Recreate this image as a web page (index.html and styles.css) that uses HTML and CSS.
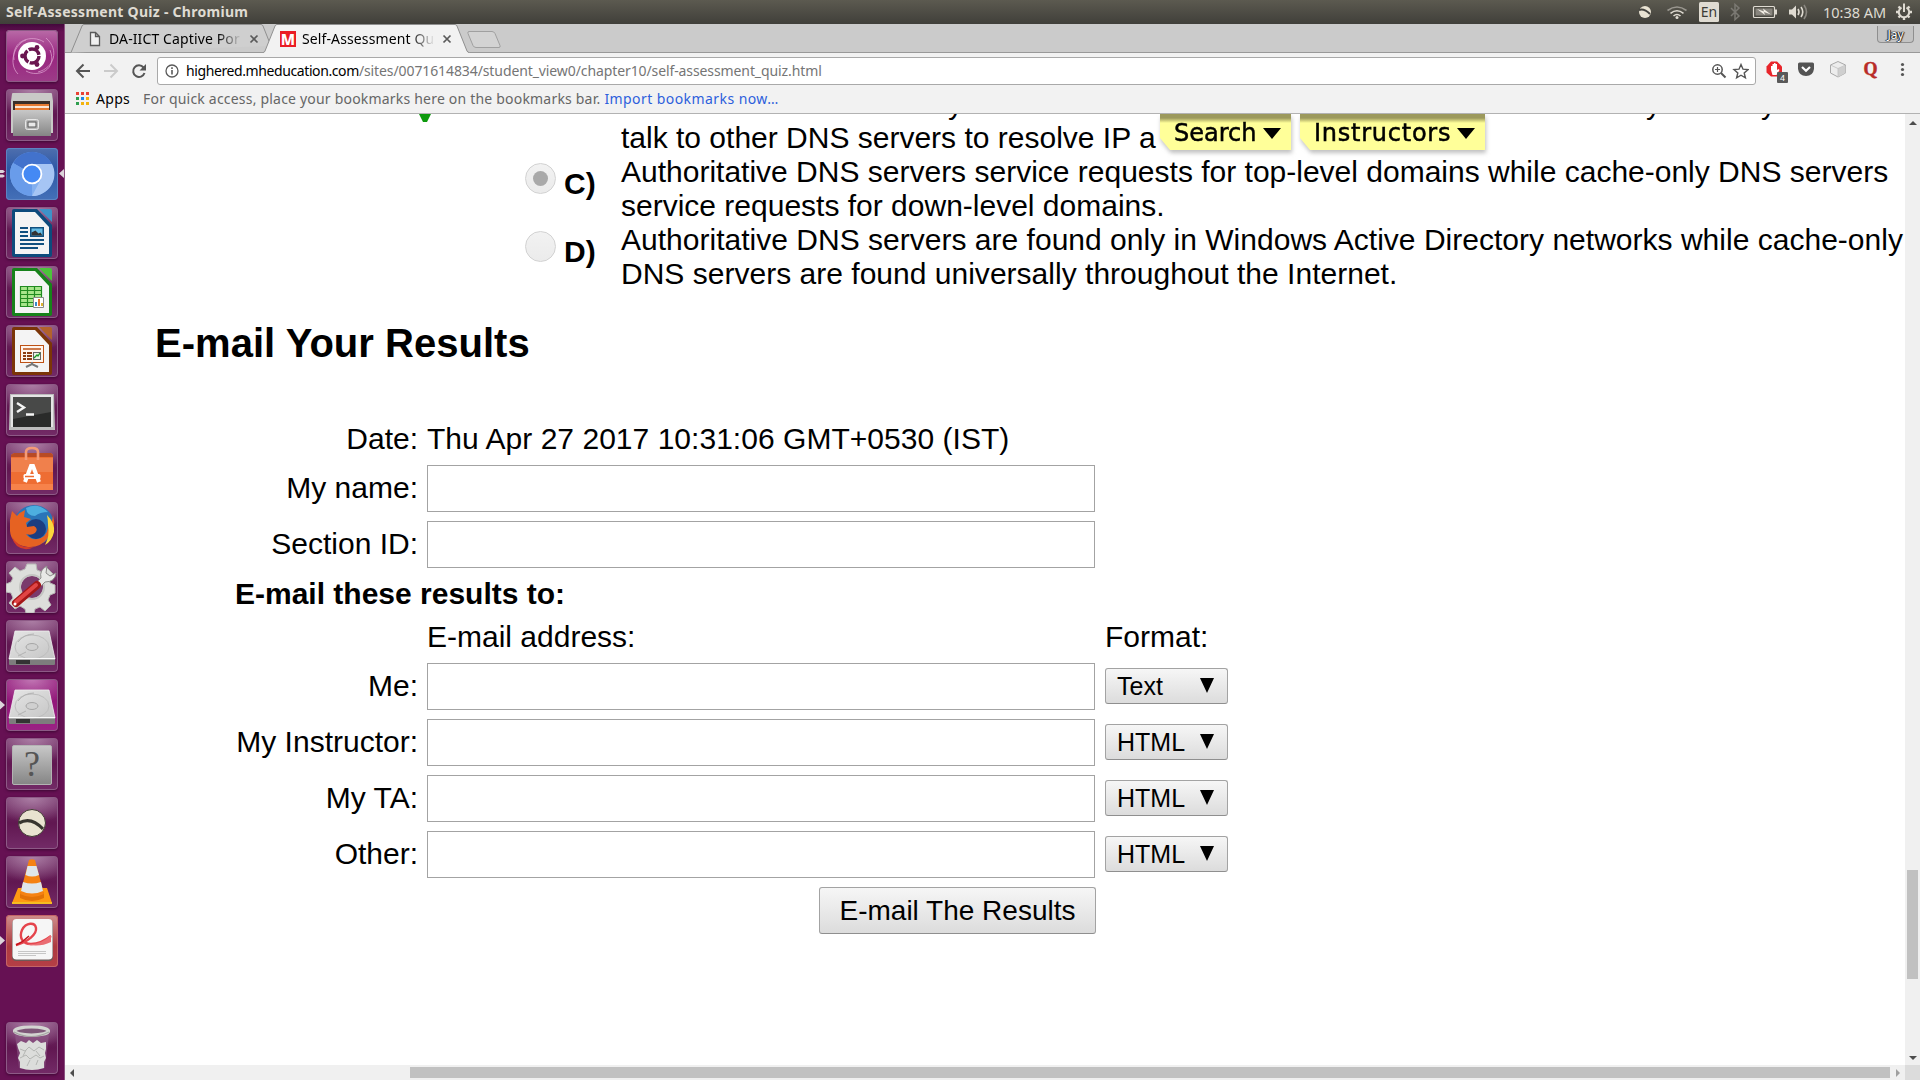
FILE: index.html
```html
<!DOCTYPE html>
<html lang="en">
<head>
<meta charset="utf-8">
<title>Self-Assessment Quiz - Chromium</title>
<link rel="stylesheet" href="styles.css">
</head>
<body>
<header class="panel">
  <span class="panel-title">Self-Assessment Quiz - Chromium</span>
  <svg class="tray" width="180" height="24" viewBox="0 0 180 24">
    <circle cx="5" cy="12" r="6" fill="#e9e3d3"/><path d="M-1 10q5-2 11 4" stroke="#454440" stroke-width="2" fill="none"/>
    <g fill="none" stroke="#dfdbd2" stroke-width="1.6"><path d="M27.500 10.500q9.500-7 19 0" stroke="#99968f"/><path d="M30.500 13.300q6.500-5 13 0"/><path d="M33.500 16q3.500-3 7 0"/></g><circle cx="37" cy="17.500" r="1.500" fill="#dfdbd2"/>
    <rect x="59" y="2" width="20" height="20" rx="1.500" fill="#dfdbd2"/>
    <text class="tray-lang" x="69" y="17" text-anchor="middle">En</text>
    <path d="M91 8l8 8-4 3.500v-15l4 3.500-8 8" fill="none" stroke="#7b7973" stroke-width="1.500"/>
    <rect x="113.500" y="6.500" width="21" height="11" rx="1" fill="none" stroke="#dfdbd2" stroke-width="1.200"/><rect x="115.500" y="8.500" width="17" height="7" fill="#88857e"/><path d="M135 9.500h2v5h-2z" fill="#dfdbd2"/><path d="M117 9l7 2.500-1-3 8 6-7-2.500 1 3z" fill="#f3efe6"/>
    <path d="M149 9.500h3l4-4v13l-4-4h-3z" fill="#dfdbd2"/><g fill="none" stroke="#dfdbd2" stroke-width="1.600"><path d="M158 9q2 3 0 6"/><path d="M161 7q3.500 5 0 10"/><path d="M164 5q5 7 0 14" stroke="#8a8780"/></g>
  </svg>
  <span class="clock">10:38 AM</span>
  <svg width="18" height="18" viewBox="-9 -9 18 18"><g stroke="#dfdbd2" fill="none"><path d="M-2.500-4.500A5.200 5.200 0 1 0 2.500-4.500M0-8.500V0" stroke-width="2"/><path d="M-5.500-5.500l1.500 1.500M5.500-5.500L4-4M-8 0h2M8 0H6M-5.500 5.500L-4 4M5.500 5.500L4 4M0 8V6" stroke-width="2.400"/></g></svg>
</header>

<div class="desktop">
<nav class="launcher">
  <svg class="tile dash" viewBox="0 0 52 52"><g fill="none" stroke="#e3a9d6" stroke-width="1" opacity=".7"><path d="M8 30C5 10 26 4 38 12M44 20c8 20-12 28-24 21M40 8c14 12 8 30-8 34M12 44C2 34 8 14 20 10"/></g><circle cx="26" cy="26" r="14" fill="#fff"/><circle cx="26" cy="26" r="7" fill="none" stroke="#6a1650" stroke-width="3.400" stroke-dasharray="13.200 1.460"/><g fill="#6a1650"><circle cx="16.500" cy="26" r="2.400"/><circle cx="31" cy="17.500" r="2.400"/><circle cx="31" cy="34.500" r="2.400"/></g></svg>
  <svg class="tile" viewBox="0 0 52 52"><path d="M6 5q0-1 1-1h38q1 0 1 1l1 7v32H5V12z" fill="#c9c9c7"/><path d="M7 12h37v11H7z" fill="#3b2f29"/><path d="M9 15h34v8H9z" fill="#e77b33"/><path d="M9 17h34v2H9z" fill="#fbe5d4"/><path d="M7 21h38v26H7z" fill="url(#steel)"/><rect x="19.500" y="30.500" width="13" height="10" rx="2" fill="#b8b8b8" stroke="#e7e7e7"/><rect x="22" y="33" width="8" height="5" fill="#e9e9e9" stroke="#555"/></svg>
  <svg class="tile chromium" viewBox="0 0 52 52"><circle cx="26" cy="26" r="22" fill="#83b0f0"/><path d="M26 26L7 15A22 22 0 0 1 46 16z" fill="#4272cc"/><path d="M26 26L7 15a22 22 0 0 0 19 33z" fill="#699cea"/><path d="M26 16h20a22 22 0 0 1-20 32l9-17z" fill="#a6c5f4"/><circle cx="26" cy="26" r="10.300" fill="#fff"/><circle cx="26" cy="26" r="8.500" fill="#4489f4"/></svg>
  <svg class="tile" viewBox="0 0 52 52"><path d="M6 4q0-2 2-2h23l15 16v30q0 2-2 2H8q-2 0-2-2z" fill="#0d4b7c"/><path d="M33 2h11q2 0 2 2v11z" fill="#3e93c8"/><path d="M9 5h20l14 15v27H9z" fill="#f4f4f4"/><path d="M14 21h8M14 25h8M14 29h8M14 33h24M14 37h24M14 41h18" stroke="#11507f" stroke-width="2"/><path d="M24 20h14v10H24z" fill="#11507f"/><path d="M25.500 21.500h11v7h-11z" fill="#66bde5"/><path d="M25.500 28.500v-3l4-2 3 3 2-1 2 3z" fill="#333"/></svg>
  <svg class="tile" viewBox="0 0 52 52"><path d="M6 4q0-2 2-2h23l15 16v30q0 2-2 2H8q-2 0-2-2z" fill="#17821a"/><path d="M33 2h11q2 0 2 2v11z" fill="#4cc33b"/><path d="M9 5h20l14 15v27H9z" fill="#f4f4f4"/><path d="M14 20h22v20H14z" fill="#a8e58b"/><path d="M14.500 20.500h21v20h-21zM14 24.500h22M14 28.500h22M14 32.500h22M14 36.500h22M21.500 20v20M28.500 20v20" fill="none" stroke="#218b20" stroke-width="1.200"/><path d="M27.500 31.500h10v10h-10z" fill="#fff" stroke="#888"/><path d="M29 36h2v4h-2z" fill="#3a88c6"/><path d="M32 33h2v7h-2z" fill="#e7732a"/><path d="M35 37h2v3h-2z" fill="#ddb230"/></svg>
  <svg class="tile" viewBox="0 0 52 52"><path d="M6 4q0-2 2-2h23l15 16v30q0 2-2 2H8q-2 0-2-2z" fill="#7b3508"/><path d="M33 2h11q2 0 2 2v11z" fill="#b2622c"/><path d="M9 5h20l14 15v27H9z" fill="#f4f4f4"/><rect x="14.500" y="20.500" width="23" height="17" fill="#fff5ed" stroke="#bd5115"/><path d="M17 24h18" stroke="#bd5115" stroke-width="1.500"/><path d="M17 28h3M17 31h3M17 34h3M21 28h5M21 31h5M21 34h5" stroke="#8d3e12" stroke-width="2"/><rect x="27.500" y="27.500" width="7" height="7" fill="#eaf5e5" stroke="#666"/><path d="M28 33l3-3 1 1 2-3" stroke="#199927" stroke-width="1.300" fill="none"/><path d="M20 42l6-3 6 3M26 37v3" stroke="#777" stroke-width="2" fill="none"/></svg>
  <svg class="tile" viewBox="0 0 52 52"><path d="M4 10h44l1 36H3z" fill="#bcbcbc"/><path d="M5 11h42v32H5z" fill="#e5e5e5"/><path d="M7 13h38v30H7z" fill="#2a2b2a"/><path d="M7 13h38v15L7 35z" fill="#484948"/><path d="M11 19l7 4.500-7 4.500M20 30.500h8" fill="none" stroke="#f4f4f4" stroke-width="2.400"/></svg>
  <svg class="tile" viewBox="0 0 52 52"><path d="M5 12l3-2h37l2 2v34H5z" fill="#ee6d33"/><path d="M5 12l3-2h37l2 2v2H5z" fill="#b84b25"/><path d="M5 15h42v14H5z" fill="#f0804c"/><path d="M5 41h42v6H5z" fill="#f7824a"/><path d="M20 17V9q0-4 6-4t6 4v8" fill="none" stroke="#f49b77" stroke-width="2.600"/><path d="M19 39l6-16h2l6 16" fill="none" stroke="#fff" stroke-width="4"/><rect x="17.500" y="31" width="17" height="5" rx="1.500" fill="#fff"/><path d="M19 33.500h9" stroke="#ee6d33" stroke-width="1.500"/></svg>
  <svg class="tile" viewBox="0 0 52 52"><circle cx="28" cy="23" r="20" fill="#2a75b8"/><path d="M20 6q12-6 22 4-8 0-13 4-8 0-9-8z" fill="#4daedf"/><circle cx="30" cy="27" r="10" fill="#1b3d80"/><path d="M4 18l2-9 5 5q3-4 8-6l-1 7 7 2-5 4 1 4 7-1q5 3 1 7-4 3-9 1 6 8 15 4 8-4 7-15 4 2 5-8 4 14-5 23-8 10-20 9Q5 43 4 29z" fill="#e66222"/><path d="M41 13q8 8 7 17-2 9-9 13 5-9 3-20 0-5-1-10z" fill="#fbd63c"/><path d="M6 35q7 12 22 10-9 5-17-1-4-4-5-9z" fill="#d33c28"/></svg>
  <svg class="tile" viewBox="0 0 52 52"><path d="M21 3h9l1 6 5 2 5-4 6 6-4 5 1 4 5 2v8l-5 2-2 5 3 5-6 6-5-4-5 2-1 4h-8l-1-4-5-3-5 3-6-6 4-5-2-5-5-1v-8l5-2 2-4-4-5 6-6 5 4 5-2z" fill="#dddedb" stroke="#b9bab7"/><circle cx="26" cy="26" r="11" fill="#7a3a6c"/><circle cx="26" cy="26" r="12" fill="none" stroke="#c4c5c2" stroke-width="2"/><path d="M29 23l6-6q-2-8 6-12l-1 7 4 3 6-3q-1 9-11 9l-6 6z" fill="#e8e9e6" stroke="#8e8e8c"/><path d="M10 42l21-18" stroke="#a41717" stroke-width="8" stroke-linecap="round"/><path d="M10 41l20-17" stroke="#e04545" stroke-width="4" stroke-linecap="round"/><circle cx="9" cy="43" r="1.500" fill="#fff"/></svg>
  <svg class="tile" viewBox="0 0 52 52"><use href="#drive"/></svg>
  <svg class="tile active" viewBox="0 0 52 52"><use href="#drive"/></svg>
  <svg class="tile" viewBox="0 0 52 52"><rect x="6.500" y="7.500" width="39" height="39" rx="1.500" fill="url(#steel)" stroke="#b3b3b3"/><text class="tile-q" x="26" y="38" text-anchor="middle">?</text></svg>
  <svg class="tile" viewBox="0 0 52 52"><circle cx="26" cy="26" r="13.500" fill="#e9e3d0" stroke="#3f3a33"/><path d="M13 26q12-7 24 6" fill="none" stroke="#37352e" stroke-width="3.200"/></svg>
  <svg class="tile" viewBox="0 0 52 52"><path d="M12 32h29l5 15H6z" fill="#ff9a12"/><path d="M6 46h40v2H6z" fill="#f5bd21"/><path d="M14 36q12 5 24 0v6q-12 6-24 0z" fill="#e27207"/><path d="M23 4q3-1.500 6 0l9 34q-12 6-24 0z" fill="#f58213"/><path d="M21.500 10h9l2.500 9q-7 3-13.500 0zM17 26q9 3 18 0l2 9q-11 5-22 0z" fill="#dfe6ea"/></svg>
  <svg class="tile reader" viewBox="0 0 52 52"><rect x="6" y="5" width="41" height="41" rx="4" fill="#6f5a58"/><rect x="6.500" y="4" width="40" height="40.500" rx="4" fill="#f6f6f6"/><path d="M10 30C22 27 31 19 30 13 29 7 20 7 16 15c-3 7 0 14 9 14 8 0 15-4 20-8" fill="none" stroke="#e5444c" stroke-width="2.400"/><path d="M19 29q15 2 26-9v7q-12 6-26 2z" fill="#ea6d73"/><path d="M10 30C17 27 21 23 23 21" stroke="#c4161e" stroke-width="1.500" fill="none"/><path d="M12 36.500h28M12 38.500h28M12 40.500h18" stroke="#c6c6c6"/></svg>
  <svg class="tile trash" viewBox="0 0 52 52"><path d="M9 12h34l-4 34q-13 4-26 0z" fill="#8d5a87" opacity=".6"/><path d="M11 22l4-3 5 2 3-3 4 3 4-3 4 3 5-1v7l-1 4 1 5-2 4v6q-12 4-24 0v-6l-2-4 2-5-2-5z" fill="#dcdddb"/><path d="M14 27l5 2 4-4 5 4 5-4 5 3M14 36l6-3 4 4 6-4 4 3 4-2M20 28l-3 6M30 29l4 5M24 38l-3 6M32 38l-2 5" stroke="#b4b6b3" fill="none"/><ellipse cx="25.500" cy="9" rx="17" ry="4" fill="#7e5678" stroke="#d3d4d1" stroke-width="3.200"/><path d="M8 10q17 9 35 0" fill="none" stroke="#a5a6a3" stroke-width="1.200"/></svg>
  <svg class="pips" width="65" height="1056" viewBox="0 24 65 1056"><g fill="#dcd5db"><path d="M0 170h3l2 1.500-2 1.500H0zM0 174.500h3l2 1.500-2 1.500H0zM64 169v9l-5-4.500zM0 700.500l5 4.500-5 4.500zM0 936l5 4.500-5 4.500z"/></g></svg>
</nav>

<main class="browser">
  <div class="tabstrip">
    <svg class="tab-shapes" width="1855" height="30" viewBox="65 24 1855 30">
      <path d="M65 52.500H1920" stroke="#999"/>
      <path d="M71 52.500L82 26q.6-1.500 2-1.500H261q1.500 0 2 1.500l8 20" fill="#cfcfcf" stroke="#8f8f8f"/>
      <path d="M263 54v-1.500q1.500 0 2-1.500l10-25q.6-1.500 2-1.500H425q1.500 0 2 1.500l10 25q.6 1.500 2.500 1.500v1.500z" fill="#f2f2f2"/>
      <path d="M263 54v-1.500q1.500 0 2-1.500l10-25q.6-1.500 2-1.500H455q1.500 0 2 1.500l10 25q.6 1.500 2.500 1.500v1.500z" fill="#f2f2f2"/><path d="M263 52.500q1.500 0 2-1.500l10-25q.6-1.500 2-1.500H455q1.500 0 2 1.500l10 25q.6 1.500 2.500 1.500" fill="none" stroke="#8f8f8f"/>
      <path d="M469 31.500h23q2 0 3 2l5 12q.6 2-1 2h-23q-2 0-3-2l-5-12q-.6-2 1-2z" fill="#d3d3d3" stroke="#a0a0a0"/>
    </svg>
    <div class="tab tab-back">
      <svg width="16" height="16" viewBox="0 0 16 16"><path d="M3.500 1.500h5l4 4v9h-9zM8.500 1.500v4h4" fill="#f0f0f0" stroke="#5a5a5a" stroke-width="1.300"/></svg>
      <span class="tab-label">DA-IICT Captive Por</span>
      <svg class="close" width="10" height="10" viewBox="0 0 10 10"><path d="M1.500 1.500l7 7M8.500 1.500l-7 7" stroke="#5a5a5a" stroke-width="1.700"/></svg>
    </div>
    <div class="tab tab-front">
      <span class="m-icon">M</span>
      <span class="tab-label">Self-Assessment Qu</span>
      <svg class="close" width="10" height="10" viewBox="0 0 10 10"><path d="M1.500 1.500l7 7M8.500 1.500l-7 7" stroke="#5a5a5a" stroke-width="1.700"/></svg>
    </div>
    <span class="user">Jay</span>
  </div>
  <div class="toolbar">
    <svg class="nav" width="82" height="20" viewBox="75 61 82 20"><g fill="none" stroke-width="2"><path d="M90 71H77.500M83.500 64.500L77 71l6.500 6.500" stroke="#555"/><path d="M104 71h12.500M110.500 64.500L117 71l-6.500 6.500" stroke="#cbcbcb"/><path d="M143.500 67.500A5.800 5.800 0 1 0 144.500 73" stroke="#555"/></g><path d="M146 64v6.500h-6.500z" fill="#555"/></svg>
    <div class="omnibox">
      <svg width="14" height="14" viewBox="0 0 14 14"><circle cx="7" cy="7" r="6" fill="none" stroke="#5a5a5a" stroke-width="1.300"/><path d="M7 6v4.500M7 3.300V5" stroke="#5a5a5a" stroke-width="1.600"/></svg>
      <span class="url"><b class="host">highered.mheducation.com</b><span class="path">/sites/0071614834/student_view0/chapter10/self-assessment_quiz.html</span></span>
      <svg class="omni-icons" width="38" height="18" viewBox="1711 62 38 18"><g fill="none" stroke="#555"><circle cx="1717.500" cy="69.500" r="4.700" stroke-width="1.500"/><path d="M1715 69.500h5M1717.500 67v5" stroke-width="1.200"/><path d="M1721 73l4.500 4.500" stroke-width="2"/><path d="M1741 64.500l2 4.700 5 .4-3.800 3.300 1.200 4.900-4.400-2.600-4.400 2.600 1.200-4.900-3.800-3.300 5-.4z" stroke-width="1.400"/></g></svg>
    </div>
    <svg class="ext" width="150" height="26" viewBox="1765 60 150 26">
      <path d="M1771 63.500h6l5 5v6l-5 4h-6l-4.500-4v-6z" fill="#e8252b"/><path d="M1771 72v-4h1.500v-2h1.500v-1h1.500v1h1.500v6l1.500-1 1 1-3 5h-4z" fill="#fff"/><rect x="1777" y="74" width="11" height="11" rx="1" fill="#595959"/><text class="badge" x="1782.500" y="83" text-anchor="middle">4</text>
      <path d="M1799.500 64.500h13q1.500 0 1.500 1.500v5q-1 7-8 7t-8-7v-5q0-1.500 1.500-1.500z" fill="#545454"/><path d="M1802 69l4 3.700 4-3.700" fill="none" stroke="#fff" stroke-width="2.200"/>
      <path d="M1838 63.500l7.500 3.500v8l-7.500 4-7.500-4v-8z" fill="#ededed" stroke="#a9a9a9"/><path d="M1838 70.500l7.500-3v7.500l-7.500 4z" fill="#cfcfcf"/><path d="M1830.500 67l7.500 3.500 7.500-3.500M1838 70.500V79" fill="none" stroke="#c0c0c0" stroke-width=".8"/>
      <text class="quora" x="1870.500" y="77" text-anchor="middle">Q</text>
      <g fill="#555"><circle cx="1902.500" cy="66.500" r="1.600"/><circle cx="1902.500" cy="71.500" r="1.600"/><circle cx="1902.500" cy="76.500" r="1.600"/></g>
    </svg>
  </div>
  <div class="bookmarks">
    <svg width="13" height="13" viewBox="0 0 13 13"><path d="M0 0h3v3H0zM5 0h3v3H5zM10 0h3v3h-3z" fill="#ea4335"/><path d="M0 5h3v3H0zM0 10h3v3H0z" fill="#2f9e4f"/><path d="M5 5h3v3H5z" fill="#1f87e8"/><path d="M10 5h3v3h-3zM5 10h3v3H5zM10 10h3v3h-3z" fill="#f3b30d"/></svg>
    <span class="apps">Apps</span>
    <span class="hint">For quick access, place your bookmarks here on the bookmarks bar.</span>
    <span class="import">Import bookmarks now…</span>
  </div>

  <div class="viewport">
    <div class="page">
      <svg class="marker" width="14" height="9" viewBox="0 0 14 9"><path d="M1 0h12L9 8H5z" fill="#0d9a0d"/></svg>
      <div class="site-menu">
        <span class="menu-tab menu-search"><span>Search</span><i></i></span>
        <span class="menu-tab menu-instr"><span>Instructors</span><i></i></span>
      </div>
      <div class="answers">
        <div class="cut-line"><span>y</span><span>y</span><span>y</span></div>
        <div class="answer">talk to other DNS servers to resolve IP a</div>
        <span class="radio checked"></span><b class="letter">C)</b>
        <div class="answer">Authoritative DNS servers service requests for top-level domains while cache-only DNS servers<br>service requests for down-level domains.</div>
        <span class="radio"></span><b class="letter">D)</b>
        <div class="answer answer-d">Authoritative DNS servers are found only in Windows Active Directory networks while cache-only<br>DNS servers are found universally throughout the Internet.</div>
      </div>
      <h2>E-mail Your Results</h2>
      <form class="mail-form">
        <label>Date:</label><div class="wide date">Thu Apr 27 2017 10:31:06 GMT+0530 (IST)</div>
        <label>My name:</label><div class="field wide"></div>
        <label>Section ID:</label><div class="field wide"></div>
        <b class="full">E-mail these results to:</b>
        <span></span><div>E-mail address:</div><div>Format:</div>
        <label>Me:</label><div class="field"></div><div class="select">Text<i></i></div>
        <label>My Instructor:</label><div class="field"></div><div class="select">HTML<i></i></div>
        <label>My TA:</label><div class="field"></div><div class="select">HTML<i></i></div>
        <label>Other:</label><div class="field"></div><div class="select">HTML<i></i></div>
        <span></span><div class="submit">E-mail The Results</div>
      </form>
    </div>
    <div class="vbar"><i class="up"></i><div class="vthumb"></div><i class="down"></i></div>
    <div class="hbar"><i class="left"></i><div class="hthumb"></div><i class="right"></i></div>
    <div class="corner"></div>
  </div>
</main>
</div>
<svg width="0" height="0" class="defs"><defs>
  <linearGradient id="steel" x2="0" y2="1"><stop stop-color="#c8c8c8"/><stop offset="1" stop-color="#858585"/></linearGradient>
  <linearGradient id="lid" x2="1" y2="1"><stop stop-color="#e6e6e6"/><stop offset="1" stop-color="#c4c4c4"/></linearGradient>
  <g id="drive"><path d="M3 39h46v5q0 1-1 1H4q-1 0-1-1z" fill="#7d7d7d"/><path d="M10 40h14v4H10z" fill="#333"/><path d="M9 11h34l6 28H3z" fill="url(#lid)" stroke="#f0f0f0" stroke-width=".8"/><ellipse cx="26" cy="27" rx="17" ry="12" fill="none" stroke="#bdbdbd"/><ellipse cx="26" cy="27" rx="6" ry="3.500" fill="#d0d0d0" stroke="#a6a6a6"/><path d="M12 22q6-8 16-8M12 36l8-4" stroke="#b2b2b2" fill="none"/><path d="M3 38.500h46" stroke="#fafafa"/></g>
</defs></svg>
</body>
</html>
```
FILE: styles.css
```css
* { box-sizing: border-box; }
body { margin: 0; width: 1920px; height: 1080px; overflow: hidden; background: #fff; font-family: "Liberation Sans", Arial, sans-serif; }
svg { display: block; flex: none; }
.defs { position: absolute; }

.panel { height: 24px; display: flex; align-items: center; background: linear-gradient(#5c5a50, #403f3a); color: #dfdbd2; font-family: "Noto Sans", "Open Sans", sans-serif; font-size: 14px; line-height: 24px; padding: 0 7px 0 6px; white-space: nowrap; }
.panel-title { font-weight: 700; letter-spacing: .28px; }
.tray { margin-left: auto; overflow: visible; }
.tray-lang { font: 14px "Noto Sans", sans-serif; fill: #3c3b37; }
.clock { width: 63px; margin: 0 9px 0 3px; font-size: 14.5px; }

.desktop { display: flex; height: 1056px; }
.launcher { position: relative; width: 65px; flex: none; display: flex; flex-direction: column; gap: 7px; padding: 6px 0 6px 6px; background: linear-gradient(#43083c, #661153 8px); border-right: 1px solid #8b5080; }
.tile { width: 52px; height: 52px; border-radius: 4px; background: radial-gradient(ellipse 80% 50% at 50% 0, #ad80a6, transparent), linear-gradient(#76366c, #611751 50%, #732b67); box-shadow: inset 0 0 0 1px #8d5a86, 0 1px 3px #3d0734; }
.dash { background: linear-gradient(#b96ba7, #992680 50%, #9d3c88); }
.chromium { background: linear-gradient(#4e6fae, #2e58a5 40%, #4470b8); box-shadow: inset 0 0 0 1px #5d83c2; }
.active { background: radial-gradient(ellipse 80% 50% at 50% 0, #c278b5, transparent), linear-gradient(#8c0e72, #9b2384); }
.reader { background: linear-gradient(#cf8f8d, #ad3a40 60%, #b53f46); box-shadow: inset 0 0 0 1px #c46466; }
.tile-q { font: 36px "Liberation Serif", serif; fill: #555; }
.trash { margin-top: auto; }
.pips { position: absolute; left: 0; top: 0; }

.browser { width: 1855px; display: flex; flex-direction: column; font-family: "Noto Sans", "Open Sans", sans-serif; }
.tabstrip { position: relative; height: 29px; display: flex; background: #cbcbcb; font-size: 14px; }
.tab-shapes { position: absolute; left: 0; top: 0; }
.tab { position: relative; display: flex; align-items: center; height: 30px; white-space: nowrap; }
.tab-back { width: 215px; padding-left: 22px; }
.tab-front { width: 190px; }
.tab-label { width: 133px; margin-left: 6px; overflow: hidden; color: #000; line-height: 20px; letter-spacing: .12px; -webkit-mask-image: linear-gradient(90deg, #000 108px, transparent 133px); mask-image: linear-gradient(90deg, #000 108px, transparent 133px); }
.close { margin-left: 7px; }
.m-icon { width: 16px; height: 16px; background: #ea1d25; color: #fff; font-weight: 800; font-size: 15px; line-height: 16px; text-align: center; }
.user { margin: 2px 6px 0 auto; position: relative; width: 37px; height: 17px; border: 1px solid #8f8f8f; border-top: 0; border-radius: 0 0 4px 4px; background: #c3c3c3; font-size: 12px; line-height: 17px; text-align: center; color: #fff; text-shadow: 0 0 1px #111, 0 0 1px #111, 1px 0 1px #222, -1px 0 1px #222; }

.toolbar { height: 35px; background: #f2f2f2; display: flex; align-items: center; padding-left: 10px; }
.nav { margin-top: 1px; }
.omnibox { width: 1599px; height: 28px; margin-top: 1px; border: 1px solid #a9a9a9; border-radius: 3px; background: #fff; display: flex; align-items: center; padding: 0 6px 0 7px; font-size: 14px; white-space: nowrap; }
.url { margin-left: 7px; line-height: 26px; }
.host { font-weight: 400; color: #000; letter-spacing: -.4px; }
.path { color: #757575; letter-spacing: -.1px; }
.omni-icons { margin-left: auto; }
.ext { margin-left: 9px; margin-top: 1px; overflow: visible; }
.badge { font: 9px "Liberation Sans", sans-serif; fill: #fff; }
.quora { font: 700 18px "Liberation Serif", serif; fill: #b92b27; stroke: #b92b27; stroke-width: .5; }
.bookmarks { height: 26px; background: #f2f2f2; border-bottom: 1px solid #b2b2b2; display: flex; align-items: center; padding: 0 0 4px 11px; font-size: 14px; line-height: 20px; white-space: nowrap; }
.apps { margin-left: 7px; width: 47px; letter-spacing: .3px; }
.hint { color: #666; letter-spacing: .2px; }
.import { color: #2d5fdc; margin-left: 4px; letter-spacing: .43px; }

.viewport { height: 966px; display: grid; grid-template: 951px 15px / 1840px 15px; font-family: "Liberation Sans", Arial, sans-serif; }
.page { position: relative; overflow: hidden; font-size: 30px; line-height: 34px; color: #000; }
.marker { position: absolute; left: 353px; top: 0; }
.site-menu { position: absolute; left: 1095px; top: 0; display: flex; gap: 9px; filter: drop-shadow(1px 3px 2px #8888); }
.menu-tab { height: 36px; display: flex; align-items: center; padding: 2px 10px 0 14px; background: linear-gradient(#9c995c 4px, #ffff99 9px); clip-path: polygon(0 0, 100% 0, 100% 100%, 10px 100%, 0 24px); font-family: "DejaVu Sans", sans-serif; font-size: 24px; line-height: 34px; -webkit-text-stroke: .5px #000; }
.menu-search { width: 131px; }
.menu-instr { width: 185px; letter-spacing: .75px; }
.menu-tab i { margin-left: auto; border: 9px solid transparent; border-top: 11px solid #000; border-bottom: 0; }
.answers { display: grid; grid-template-columns: 39px 57px 1290px; margin: -27px 0 0 460px; white-space: nowrap; }
.cut-line { grid-column: 3; display: grid; grid-template-columns: 342px 698px 115px 40px; }
.cut-line span { grid-row: 1; text-align: right; }
.answer { grid-column: 3; }
.answer-d { letter-spacing: .015px; }
.radio { width: 31px; height: 31px; margin-top: 8px; border: 1px solid #d2d2d2; border-radius: 50%; background: linear-gradient(#f2f2f2, #ebebeb); display: grid; place-items: center; }
.checked::after { content: ""; width: 15px; height: 15px; border-radius: 50%; background: #a9a9a9; }
.letter { margin-top: 12px; }
h2 { margin: 29px 0 0 90px; font-size: 40px; line-height: 46px; letter-spacing: .03px; }
.mail-form { display: grid; grid-template-columns: 183px 669px 123px; gap: 9px; grid-auto-rows: minmax(34px, auto); align-items: center; margin: 56px 0 0 170px; white-space: nowrap; }
.mail-form label { text-align: right; }
.mail-form label:not(:first-child), .mail-form .select { margin-bottom: 2px; }
.wide { grid-column: 2 / 4; }
.date { letter-spacing: .03px; }
.full { grid-column: 1 / 4; }
.field { width: 668px; height: 47px; border: 1px solid #a3a3a3; background: #fff; }
.select { height: 36px; border: 1px solid #a3a3a3; border-bottom-color: #8f8f8f; border-radius: 3px; background: linear-gradient(#f6f6f6, #dcdcdc); display: flex; align-items: center; justify-content: space-between; padding: 0 13px 0 11px; font-size: 25px; line-height: 34px; }
.select i { border: 7.5px solid transparent; border-top: 15px solid #000; border-bottom: 0; }
.submit { justify-self: end; width: 277px; height: 47px; border: 1px solid #a3a3a3; border-bottom-color: #8f8f8f; border-radius: 3px; background: linear-gradient(#f6f6f6, #dcdcdc); font-size: 28px; line-height: 45px; text-align: center; }

.vbar, .hbar { background: #f0f0f0; display: flex; align-items: center; }
.vbar { flex-direction: column; padding: 7px 0 5px; }
.vthumb { width: 11px; height: 109px; background: #c1c1c1; margin-top: 745px; }
.hbar { padding: 0 5px; }
.hthumb { height: 11px; width: 1480px; background: #c1c1c1; margin-left: 336px; }
.up { border: 4px solid transparent; border-bottom: 4px solid #4d4d4d; border-top: 0; }
.down { margin-top: auto; border: 4px solid transparent; border-top: 4px solid #4d4d4d; border-bottom: 0; }
.left { border: 4px solid transparent; border-right: 4px solid #4d4d4d; border-left: 0; }
.right { margin-left: auto; border: 4px solid transparent; border-left: 4px solid #a0a0a0; border-right: 0; }
.corner { background: #dcdcdc; }
```
